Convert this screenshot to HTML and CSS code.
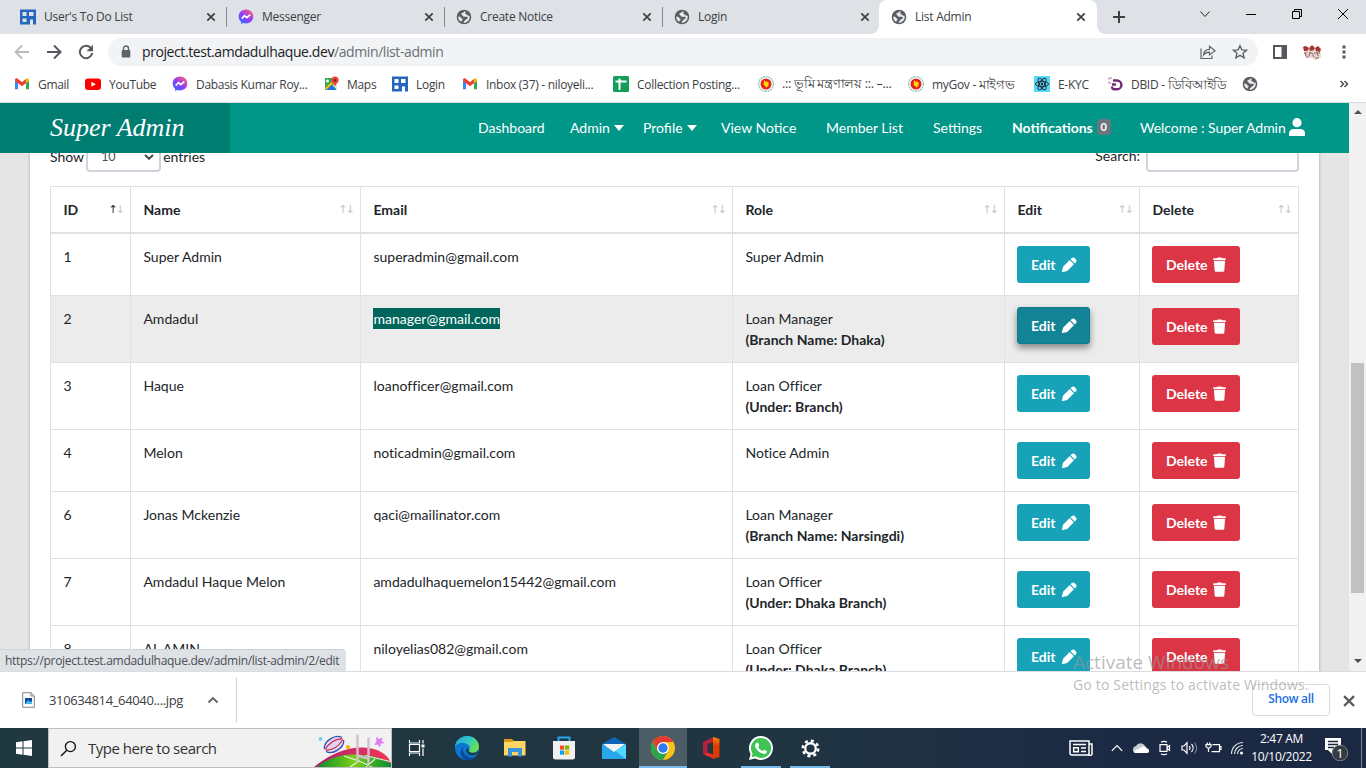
FILE: index.html
```html
<!DOCTYPE html>
<html lang="en">
<head>
<meta charset="utf-8">
<title>List Admin</title>
<link rel="stylesheet" href="styles.css">
</head>
<body>
<svg class="defs" width="0" height="0" aria-hidden="true">
  <defs>
    <linearGradient id="gm" x1="0" y1="1" x2=".8" y2="0"><stop offset="0" stop-color="#1a7cff"/><stop offset=".5" stop-color="#8a3cff"/><stop offset="1" stop-color="#ff5a80"/></linearGradient>
    <linearGradient id="ge" x1="0" y1="0" x2="1" y2=".5"><stop offset="0" stop-color="#1fa5e0"/><stop offset=".6" stop-color="#36c9c0"/><stop offset="1" stop-color="#6be04e"/></linearGradient>
    <linearGradient id="gf" x1="0" y1="0" x2="1" y2="0"><stop offset="0" stop-color="#0b8a28"/><stop offset=".5" stop-color="#7ad017"/><stop offset="1" stop-color="#0c8b34"/></linearGradient>
    <linearGradient id="gp" x1="0" y1="0" x2="1" y2="0"><stop offset="0" stop-color="#b02070"/><stop offset="1" stop-color="#f23658"/></linearGradient>
    <linearGradient id="go" x1="0" y1="0" x2="0" y2="1"><stop offset="0" stop-color="#ff8a00"/><stop offset=".4" stop-color="#e03c00"/><stop offset="1" stop-color="#d83b01"/></linearGradient>
  </defs>
  <symbol id="grid" viewBox="0 0 16 16"><path fill="#2467bd" fill-rule="evenodd" d="M0 .5h16v15h-3v-5h-3v5H0zM2.500 3v4h4V3zM9 3v4h4.500V3zM2.500 9.500v3.500h4V9.500z"/></symbol>
  <symbol id="globe" viewBox="0 0 16 16"><circle cx="8" cy="8" r="7.300" fill="#5a5e63"/><path fill="#e8eaec" d="M9.500 2.300c-1.800.3-2 1.500-3.300 1.700C5.200 4.200 5 5.500 6 6c1.200.5.500 1.500 2 1.700 1.300.2 3-.3 3.700.7.500.9-.4 1.500-1.400 1.700-.9.300-.7 1.600-1.900 1.800-.5.100-.8 1-.7 1.900 3.300.1 6-2.500 6-5.800 0-.6-.1-1.100-.2-1.600-1 .5-1.900.2-2.200-.5-.4-.8-1.300-.4-1.800-1-.5-.8.300-1.500 0-2.600zM2.300 7.500c-.2 2 .7 4.200 2.700 5.300.9-.3.600-1.400 1.300-1.700.8-.4.200-1.600-.6-1.700-1.200-.2-.7-1.400-1.800-1.600z"/></symbol>
  <symbol id="msg" viewBox="0 0 16 16"><path fill="url(#gm)" d="M8 .6C3.700.6.700 3.600.700 7.500c0 2.200.9 4 2.400 5.200l.1 2.300 2-.9c.9.300 1.800.4 2.800.4 4.300 0 7.300-3 7.300-6.900S12.300.6 8 .6z"/><path d="m3.700 9.700 2.800-3 2.300 1.900 3.500-2.900" fill="none" stroke="#fff" stroke-width="1.700"/></symbol>
  <symbol id="gmail" viewBox="0 0 16 16"><path fill="#4285f4" d="M1 4v9.200h3V7z"/><path fill="#34a853" d="M15 4v9.200h-3V7z"/><path fill="#ea4335" d="M1 3.800c0-1.500 1.600-2 2.700-1.100L8 6l4.300-3.300V7L8 10.200 1 5z"/><path fill="#fbbc04" d="M12 7V2.900c1.200-1.200 3-.6 3 .9V5z"/></symbol>
  <symbol id="x" viewBox="0 0 12 12"><path d="M2.300 2.300 9.700 9.700M9.700 2.300 2.300 9.700" stroke="currentColor" stroke-width="1.700"/></symbol>
  <symbol id="bd" viewBox="0 0 16 16"><circle cx="8" cy="8" r="7.300" fill="#fff" stroke="#8ec9ac" stroke-width="1.300" stroke-dasharray="2 .6"/><circle cx="8" cy="8" r="5.500" fill="#e32222"/><path fill="#ffd900" d="m6 4 1.500 2 1-.7 2.300 1.500-.4 3-1.900 1.900-1.600-1.900L5.700 9z"/></symbol>
  <symbol id="pencil" viewBox="0 0 16 16"><path fill="#fff" d="m.8 15.200 1.200-5.400L8.700 3.100 12.900 7.300 6.200 14zM9.500 2.300l1.300-1.300c.8-.8 2-.8 2.800 0l1.400 1.400c.8.8.8 2 0 2.800l-1.300 1.300z"/></symbol>
  <symbol id="trash" viewBox="0 0 14 16"><path fill="#fff" d="M.3 1.300h3.900L5 .4h4l.8.900h3.900v1.800H.3zM1 4h12l-.8 10.500c0 .7-.5 1.200-1.200 1.200H3c-.7 0-1.200-.5-1.200-1.200z"/></symbol>
</svg>

<header class="tabs">
  <div class="tab"><svg class="i16"><use href="#grid"/></svg><span>User's To Do List</span><svg class="close"><use href="#x"/></svg></div>
  <div class="tab"><svg class="i16"><use href="#msg"/></svg><span>Messenger</span><svg class="close"><use href="#x"/></svg></div>
  <div class="tab"><svg class="i16"><use href="#globe"/></svg><span>Create Notice</span><svg class="close"><use href="#x"/></svg></div>
  <div class="tab last"><svg class="i16"><use href="#globe"/></svg><span>Login</span><svg class="close"><use href="#x"/></svg></div>
  <div class="tab active"><svg class="i16"><use href="#globe"/></svg><span>List Admin</span><svg class="close"><use href="#x"/></svg></div>
  <svg class="plus" viewBox="0 0 14 14"><path d="M7 1v12M1 7h12" stroke="#3c4043" stroke-width="2"/></svg>
  <div class="winctl">
    <svg viewBox="0 0 12 12"><path d="m1.500 3.500 4.500 5 4.500-5" fill="none" stroke="#222"/></svg>
    <svg viewBox="0 0 12 12"><path d="M1 6.500h10" stroke="#000"/></svg>
    <svg viewBox="0 0 12 12"><path d="M1.500 3.500h7v7h-7zM3.500 3.500v-2h7v7h-2" fill="none" stroke="#000"/></svg>
    <svg viewBox="0 0 12 12"><path d="m1 1 10 10M11 1 1 11" stroke="#000"/></svg>
  </div>
</header>

<div class="toolbar">
  <div class="navbtns">
    <svg viewBox="0 0 16 16"><path d="M15 8H2M8 1.500 1.500 8 8 14.500" fill="none" stroke="#b9bbbe" stroke-width="1.800"/></svg>
    <svg viewBox="0 0 16 16"><path d="M1 8h13M8 1.500 14.500 8 8 14.500" fill="none" stroke="#55585c" stroke-width="2"/></svg>
    <svg viewBox="0 0 16 16"><path d="M13.200 4.500A6.200 6.200 0 1 0 14.200 9" fill="none" stroke="#55585c" stroke-width="2"/><path fill="#55585c" d="M15 .8v6.400H8.600z"/></svg>
  </div>
  <div class="address">
    <svg class="lock" viewBox="0 0 10 13"><path d="M2.500 6V3.500a2.500 2.500 0 0 1 5 0V6" fill="none" stroke="#5f6368" stroke-width="1.400"/><rect x=".7" y="5" width="8.600" height="7.500" rx="1" fill="#5f6368"/></svg>
    <span class="url">project.test.amdadulhaque.dev<i>/admin/list-admin</i></span>
    <svg class="i16 share" viewBox="0 0 16 16"><path d="M1 4.500v10h11v-3M3.500 11c.5-4 2.700-5.700 6-5.700V2.200L15 6.700l-5.500 4.200V8.200C7 8.200 5 9 3.500 11z" fill="none" stroke="#5f6368" stroke-width="1.200"/></svg>
    <svg class="i16" viewBox="0 0 16 16"><path d="m8 1.700 1.900 4.200 4.600.4-3.500 3 1.100 4.500L8 11.400l-4.100 2.400L5 9.300l-3.500-3 4.600-.4z" fill="none" stroke="#5f6368" stroke-width="1.400"/></svg>
  </div>
  <svg class="panel" viewBox="0 0 14 14"><path fill="#55585c" fill-rule="evenodd" d="M0 0h14v14H0zM2 2v10h6.500V2z"/></svg>
  <svg class="avatar" viewBox="0 0 20 16"><path fill="#c9a79f" d="M2 6h16l1 7-5 3-4-2-7-1z" opacity=".5"/><path fill="#a4342e" d="M1 3l2-1 3 1 1 2-2 2H2zM7 4l3-3 3 3-1 2-4 1zM13 4l3-2 3 3-1 3-4-1z"/><path d="M2 9h3m2 0h3m2 0h6M3 9l1 3m4-4-1 4m3-3 2 4m3-5 1 4M4 13h3m6 1h4" stroke="#8b4a44" stroke-width="1" opacity=".8"/></svg>
  <svg class="menu" viewBox="0 0 4 14"><path fill="#55585c" d="M.5.500h3v3h-3zM.5 5.500h3v3h-3zM.5 10.500h3v3h-3z"/></svg>
</div>

<div class="bookmarks">
  <a><svg class="i16"><use href="#gmail"/></svg>Gmail</a>
  <a><svg class="i16" viewBox="0 0 16 16"><rect y="2.500" width="16" height="11.500" rx="3" fill="#f00"/><path fill="#fff" d="m6.300 5.700 4.500 2.500-4.500 2.500z"/></svg>YouTube</a>
  <a><svg class="i16"><use href="#msg"/></svg>Dabasis Kumar Roy...</a>
  <a><svg class="i16" viewBox="0 0 16 16"><path fill="#34a853" d="M2 2h11v12H2z"/><path fill="#1a73e8" d="M13.500 14H3l5.500-5z"/><path fill="#fbbc04" d="m2 12 8-7.500 1.500 1.500L3 14z"/><path fill="#e0e3e7" d="m9.500 9 2-1.500L14 9v5z"/><path fill="#ea4335" d="M12 .5a3.600 3.600 0 0 0-3.600 3.700c0 2.400 2.700 3.300 3.600 6.300.9-3 3.600-3.900 3.600-6.300A3.600 3.600 0 0 0 12 .5z"/><circle cx="12" cy="4.200" r="1.300" fill="#891d18"/><circle cx="4.500" cy="5" r="1.500" fill="#fff"/></svg>Maps</a>
  <a><svg class="i16"><use href="#grid"/></svg>Login</a>
  <a><svg class="i16"><use href="#gmail"/></svg>Inbox (37) - niloyeli...</a>
  <a><svg class="i16" viewBox="0 0 16 16"><rect width="16" height="16" rx="1.500" fill="#129d58"/><path stroke="#fff" stroke-width="2" d="M2.500 5.500h11M6.500 2.500v11.500"/></svg>Collection Posting...</a>
  <a class="bn bn1"><svg class="i16"><use href="#bd"/></svg><span>.:: ভূমি মন্ত্রণালয় ::. –...</span></a>
  <a class="bn bn2"><svg class="i16"><use href="#bd"/></svg><span>myGov - <em>মাইগভ</em></span></a>
  <a><svg class="i16" viewBox="0 0 16 16"><rect width="16" height="16" rx="1" fill="#55d7fa"/><g fill="none" stroke="#20232a" stroke-width=".9"><ellipse cx="8" cy="8" rx="6.500" ry="2.600"/><ellipse cx="8" cy="8" rx="6.500" ry="2.600" transform="rotate(60 8 8)"/><ellipse cx="8" cy="8" rx="6.500" ry="2.600" transform="rotate(120 8 8)"/></g><circle cx="8" cy="8" r="1.200" fill="#20232a"/></svg>E-KYC</a>
  <a class="bn bn3"><svg class="i16" viewBox="0 0 16 16"><path d="M6 4.500h4a4.300 4.300 0 0 1 0 8.800H7.500C6 13.300 5 12 5 10.500M5 8.500h4" fill="none" stroke="#772879" stroke-width="2.400"/><path d="m5 2-3 .2.500 1.600M1 6l3 1.500" fill="none" stroke="#d7a3b4" stroke-width="1.500"/></svg><span>DBID - <em>ডিবিআইডি</em></span></a>
  <a><svg class="i16"><use href="#globe"/></svg></a>
  <svg class="more" viewBox="0 0 10 8"><path d="m1.500 1 3 3-3 3M5.500 1l3 3-3 3" fill="none" stroke="#4b4f53" stroke-width="1.500"/></svg>
</div>

<div class="viewport">
  <main class="page">
    <nav class="nav">
      <div class="brand"><span>Super Admin</span></div>
      <div class="links">
        <a>Dashboard</a>
        <a>Admin<b class="caret"></b></a>
        <a>Profile<b class="caret"></b></a>
        <a>View Notice</a>
        <a>Member List</a>
        <a>Settings</a>
        <a class="strong">Notifications<span class="count">0</span></a>
        <a class="welcome">Welcome : Super Admin<svg class="user" viewBox="0 0 16 18"><circle cx="8" cy="4.700" r="4.600" fill="#fff"/><path fill="#fff" d="M0 18v-2.500C0 12.500 2 11 4.500 11h7c2.500 0 4.500 1.500 4.500 4.500V18z"/></svg></a>
      </div>
    </nav>
    <div class="content">
      <section class="card">
        <div class="controls">
          <div class="length">Show <div class="select">10<svg viewBox="0 0 10 6"><path d="m1 1 4 3.700L9 1" fill="none" stroke="#3f464c" stroke-width="2"/></svg></div> entries</div>
          <div class="search">Search: <div class="input"></div></div>
        </div>
        <table class="list">
          <colgroup><col class="c1"><col class="c2"><col class="c3"><col class="c4"><col class="c5"><col class="c6"></colgroup>
          <thead><tr>
            <th><div>ID<span class="sort"><b>↑</b>↓</span></div></th>
            <th><div>Name<span class="sort">↑↓</span></div></th>
            <th><div>Email<span class="sort">↑↓</span></div></th>
            <th><div>Role<span class="sort">↑↓</span></div></th>
            <th><div>Edit<span class="sort">↑↓</span></div></th>
            <th><div>Delete<span class="sort">↑↓</span></div></th>
          </tr></thead>
          <tbody>
            <tr><td>1</td><td>Super Admin</td><td>superadmin@gmail.com</td><td>Super Admin</td><td><a class="btn edit">Edit<svg><use href="#pencil"/></svg></a></td><td><a class="btn del">Delete<svg><use href="#trash"/></svg></a></td></tr>
            <tr class="hover"><td>2</td><td>Amdadul</td><td><mark>manager@gmail.com</mark></td><td>Loan Manager<br><b>(Branch Name: Dhaka)</b></td><td><a class="btn edit pressed">Edit<svg><use href="#pencil"/></svg></a></td><td><a class="btn del">Delete<svg><use href="#trash"/></svg></a></td></tr>
            <tr><td>3</td><td>Haque</td><td>loanofficer@gmail.com</td><td>Loan Officer<br><b>(Under: Branch)</b></td><td><a class="btn edit">Edit<svg><use href="#pencil"/></svg></a></td><td><a class="btn del">Delete<svg><use href="#trash"/></svg></a></td></tr>
            <tr><td>4</td><td>Melon</td><td>noticadmin@gmail.com</td><td>Notice Admin</td><td><a class="btn edit">Edit<svg><use href="#pencil"/></svg></a></td><td><a class="btn del">Delete<svg><use href="#trash"/></svg></a></td></tr>
            <tr><td>6</td><td>Jonas Mckenzie</td><td>qaci@mailinator.com</td><td>Loan Manager<br><b>(Branch Name: Narsingdi)</b></td><td><a class="btn edit">Edit<svg><use href="#pencil"/></svg></a></td><td><a class="btn del">Delete<svg><use href="#trash"/></svg></a></td></tr>
            <tr><td>7</td><td>Amdadul Haque Melon</td><td>amdadulhaquemelon15442@gmail.com</td><td>Loan Officer<br><b>(Under: Dhaka Branch)</b></td><td><a class="btn edit">Edit<svg><use href="#pencil"/></svg></a></td><td><a class="btn del">Delete<svg><use href="#trash"/></svg></a></td></tr>
            <tr><td>8</td><td>AL AMIN</td><td>niloyelias082@gmail.com</td><td>Loan Officer<br><b>(Under: Dhaka Branch)</b></td><td><a class="btn edit">Edit<svg><use href="#pencil"/></svg></a></td><td><a class="btn del">Delete<svg><use href="#trash"/></svg></a></td></tr>
          </tbody>
        </table>
      </section>
    </div>
  </main>
  <div class="scrollbar"><i class="up"></i><div class="thumb"></div><i class="down"></i></div>
  <div class="status">https://project.test.amdadulhaque.dev/admin/list-admin/2/edit</div>
</div>

<div class="downloads">
  <div class="file">
    <svg class="doc" viewBox="0 0 13 16"><path d="M.7.700h8.300l3.300 3.300v11.300H.7z" fill="#fafafa" stroke="#888"/><path d="M9 .7V4h3.300" fill="none" stroke="#888"/><path fill="#134a9a" d="M3 6h7v6H3z"/><path fill="#43b9ee" d="m3 12 3-4 2 2 2-1v3z"/></svg>
    <span>310634814_64040....jpg</span>
    <svg class="chev" viewBox="0 0 12 8"><path d="m1.500 6.500 4.500-4.500 4.500 4.500" fill="none" stroke="#5f6368" stroke-width="1.800"/></svg>
  </div>
  <a class="showall">Show all</a>
  <svg class="dclose"><use href="#x"/></svg>
</div>
<div class="watermark"><p class="wm1">Activate Windows</p><p class="wm2">Go to Settings to activate Windows.</p></div>

<footer class="taskbar">
  <div class="cell start"><svg viewBox="0 0 16 16" width="16" height="16"><path fill="#fff" d="M0 2.300 6.500 1.300v6.200H0zM7.500 1.200 16 0v7.500H7.500zM0 8.500h6.500v6.200L0 13.700zM7.500 8.500H16V16l-8.500-1.200z"/></svg></div>
  <div class="find">
    <svg class="glass" viewBox="0 0 18 18"><circle cx="11" cy="7" r="5.300" fill="none" stroke="#111" stroke-width="1.400"/><path d="M7.200 10.800 1 17" stroke="#111" stroke-width="1.500"/></svg>
    <span>Type here to search</span>
    <svg class="rugby" viewBox="0 0 78 38"><path fill="url(#gp)" d="M1 38C14 27 32 18 50 18.500 66 19 75 26 78 34v4z"/><path fill="url(#gf)" d="M4 38c10-8 22-12.500 36-12.500 18 0 33 5 38 9.500v3z"/><path d="M31 27l15 5-9 6M46 32l13 6M62 30l-9 8M52 26.500l25 6" fill="none" stroke="#e6f5d9" stroke-width="1.100"/><path d="M44.500 5.500v27M55.500 8.500v27M44 26.500l11 3" stroke="#d2bfd0" stroke-width="2.400"/><circle cx="7.500" cy="10" r="1.900" fill="#6dd2e8"/><circle cx="35" cy="18" r="2" fill="#ffae00"/><path fill="#e07cf5" d="m63 8 3 2 3.500-1.500-1 3.500 3.500 2-4 .5-1 4-2-3-4 .5 2.500-3.500z"/><g transform="rotate(-33 21 15.500)"><ellipse cx="21" cy="15.500" rx="11" ry="6.500" fill="#ddd5f2"/><path d="M10.500 14C14 7 28 7 31.500 14M10.500 17c3.500 7 17.500 7 21 0" fill="none" stroke="#3550b0" stroke-width="1.300"/><path d="M11 15q10-5.500 20 0M11 16q10 5.500 20 0" fill="none" stroke="#d52645" stroke-width="1.100"/></g></svg>
  </div>
  <div class="cell w48"><svg viewBox="0 0 17 16" width="17" height="16"><path d="M1.500 0v3h10V0M1.500 16v-3h10v3M1.500 4.500h10v7h-10zM15 0v3.500M15 8.500V16" fill="none" stroke="#fff" stroke-width="1.200"/><path fill="#fff" d="M13.500 4.500h3v3h-3z"/></svg></div>
  <div class="cell w54"><svg viewBox="0 0 24 24" width="24" height="24"><circle cx="12" cy="12" r="12" fill="#0a78d0"/><path fill="url(#ge)" d="M0 11C.5 4 6 0 12 0c7 0 12 5 12 10.500 0 4-3 6-6.500 6-2.500 0-4-1-3.500-2 1-1.500 1.500-3 0-5C10 5.500 3 6 0 11z"/><path fill="#0c4a9a" d="M9 10c-3 5 1 11 7.500 11.500 2.500 0 4-.6 5.500-1.500C19 24 13 25 9.500 23.500 5 21 4 14 9 10z"/><path fill="#213640" d="M14 14.500c-1 1.500 1 2.500 3.500 2.500 2 0 4-.5 5.500-2-.2 3-3 4.500-6 4.500-4 0-7-4-5-7.500z"/></svg></div>
  <div class="cell w42"><svg viewBox="0 0 22 20" width="22" height="20"><path fill="#d99a17" d="M0 1h8l2 2v5H0z"/><path fill="#ffd566" d="M0 4h8l2-1h11.500v14.500H0z"/><path fill="#3b94d9" d="M4 10h14v8.500h-4V14H8v4.500H4z"/></svg></div>
  <div class="cell w56"><svg viewBox="0 0 24 24" width="24" height="24"><path d="M6.500 5V1.500h11V5" fill="none" stroke="#27a7e8" stroke-width="2"/><path fill="#f0f0f0" d="M1 5h22v16a2.500 2.500 0 0 1-2.500 2.500h-17A2.500 2.500 0 0 1 1 21z"/><path fill="#f25022" d="M8 9.500h4.200v4.200H8z"/><path fill="#7fba00" d="M13 9.500h4.200v4.200H13z"/><path fill="#00a4ef" d="M8 14.500h4.200v4.200H8z"/><path fill="#ffb900" d="M13 14.500h4.200v4.200H13z"/></svg></div>
  <div class="cell w44"><svg viewBox="0 0 24 24" width="24" height="24"><path fill="#0f65b8" d="M0 8 12 1l12 7v7H0z"/><path fill="#f3f4f5" d="M1 8h22l-11 9z"/><path fill="#28a8ea" d="m0 8 12 8 12-8v15H0z"/><path fill="#50d9ff" d="m13.500 15 10.500 8V8z"/></svg></div>
  <div class="cell chrome"><svg viewBox="0 0 24 24" width="24" height="24"><circle cx="12" cy="12" r="12" fill="#fbc116"/><path fill="#e33b2e" d="M1.600 6A12 12 0 0 1 22.400 6H12l-5 9z"/><path fill="#2da44e" d="M1.600 6A12 12 0 0 0 12 24l5.200-9L12 17l-5.200-2z"/><circle cx="12" cy="12" r="6" fill="#fff"/><circle cx="12" cy="12" r="4.700" fill="#3078ee"/></svg></div>
  <div class="cell w42"><svg viewBox="0 0 18 22" width="18" height="22"><path fill="#b5203c" d="M1 5 12 0v5L5.500 7v8.500L1 17z"/><path fill="url(#go)" d="m11 0 6.500 2v18L11 22z"/><path fill="#e9302d" d="m1 17 4.500-1.500L12 18v4z"/></svg></div>
  <div class="cell run w58"><svg viewBox="0 0 24 24" width="24" height="24"><path fill="#fff" d="M12 0a12 12 0 0 0-10.400 18L0 24l6-1.600A12 12 0 1 0 12 0z"/><path fill="#3dc453" d="M12 2a10 10 0 0 0-8.400 15.400l-1 3.900 4-1A10 10 0 1 0 12 2z"/><path fill="#fff" d="M8 6.500c.8 0 1.100 0 1.400.8l.8 2c0 .5-.5 1.200-1.100 1.800 1.100 2 2.600 3.200 4.600 4 .7-.8 1.200-1.500 1.600-1.400l2.400 1.200c.5.400 0 1.700-.6 2.300-1 .8-2.400 1.100-4.900-.1-2.800-1.200-5-3.700-5.900-6-.7-2 .4-4 1.700-4.600z"/></svg></div>
  <div class="cell run w40"><svg viewBox="0 0 18 18" width="19" height="19"><circle cx="9" cy="9" r="5" fill="none" stroke="#fff" stroke-width="2.200"/><circle cx="9" cy="9" r="7.300" fill="none" stroke="#fff" stroke-width="2.500" stroke-dasharray="2.870 2.870"/></svg></div>
  <div class="tray">
    <div class="cell w36"><svg viewBox="0 0 24 16" width="24" height="16"><path d="M1 1h19v14H3a2 2 0 0 1-2-2zM20 4h3v9a2 2 0 0 1-4 1M4 4.500h13M12 8h5M12 11.500h5M4.700 7.700h4.600v4.100H4.700z" fill="none" stroke="#fff" stroke-width="1.500"/></svg></div>
    <div class="cell w24 first"><svg viewBox="0 0 12 8" width="12" height="8"><path d="m.8 6.800 5.200-5.200 5.200 5.200" fill="none" stroke="#fff" stroke-width="1.200"/></svg></div>
    <div class="cell w24"><svg viewBox="0 0 16 12" width="16" height="12"><path fill="#c8ccd0" d="M0 8a4 4 0 0 1 3-4 5 5 0 0 1 9 0l4 4-4 3H3a3 3 0 0 1-3-3z"/><path fill="#fff" d="M1 9.500C3 7 6 7 8 5.500c3-2 5-.5 5 1 2 0 3 1 3 2.500S15 11 14 11H3c-1 0-1.600-.5-2-1.500z"/></svg></div>
    <div class="cell w24"><svg viewBox="0 0 14 16" width="14" height="16"><path d="M3 2.300Q6 .3 9 2.300M3 13.700q3 2 6 0M2 4.700h7v6.600H2zM9 7.500l2.500-1.800v4.600L9 8.500" fill="none" stroke="#fff" stroke-width="1.200"/></svg></div>
    <div class="cell w24"><svg viewBox="0 0 17 14" width="17" height="14"><path d="M1 5h2L6 1.700v10.600L3 9H1zM8.500 5a4 4 0 0 1 0 4M10.500 3a6 6 0 0 1 0 8" fill="none" stroke="#fff" stroke-width="1.200"/><path d="M13.500 1.500a9 9 0 0 1 0 11" fill="none" stroke="#8b95a5"/></svg></div>
    <div class="cell w24"><svg viewBox="0 0 17 14" width="17" height="14"><path d="M7.500 3.600h7v7h-8M14.500 5.500H16v3h-1.500M1 3.600h5v2L4.500 7h-2L1 5.600zM2.300 1.500v2M4.700 1.500v2M3.500 7v4" fill="none" stroke="#fff" stroke-width="1.200"/></svg></div>
    <div class="cell w24"><svg viewBox="0 0 14 14" width="14" height="14"><path d="M1.500 13A11.500 11.500 0 0 1 13 1.500M4.500 13A8.500 8.500 0 0 1 13 4.500M7.500 13A5.500 5.500 0 0 1 13 7.500" fill="none" stroke="#dfe3e9" stroke-width="1.200"/><circle cx="11.500" cy="12" r="1.500" fill="#fff"/></svg></div>
    <div class="clock"><span>2:47 AM</span><span class="date">10/10/2022</span></div>
    <div class="cell note"><svg viewBox="0 0 26 26" width="26" height="26"><path fill="#fff" d="M2 3h16v12H9v4l-4-4H2z"/><path d="M5 6.500h10M5 9.500h10M5 12.500h6" stroke="#1e2b3c" stroke-width="1.300"/><circle cx="17" cy="18" r="7.800" fill="#343a40" stroke="#777d84"/><text x="17" y="22.500" text-anchor="middle" class="badge">1</text></svg></div>
  </div>
</footer>
</body>
</html>
```
FILE: styles.css
```css
* { box-sizing: border-box; }
body {
  margin: 0; width: 1366px; height: 768px; overflow: hidden; position: relative;
  display: flex; flex-direction: column; background: #fff; color: #3c4043;
  font-family: "Open Sans", "Noto Sans", sans-serif; font-size: 12px; white-space: nowrap;
}
.defs { position: absolute; }
svg { display: block; flex: none; }
.i16 { width: 16px; height: 16px; }

/* Tab strip */
.tabs { height: 34px; background: #dee1e6; display: flex; align-items: center; padding-left: 8px; }
.tab { width: 218px; height: 34px; padding: 0 9px 0 12px; display: flex; align-items: center; gap: 8px; position: relative; letter-spacing: -.25px; }
.tab.last { width: 217px; padding-right: 8px; }
.tab span { flex: 1; margin-top: -1px; }
.close { width: 12px; height: 12px; color: #3c4043; }
.tab:not(.active):not(.last)::after { content: ""; position: absolute; right: -1px; top: 7px; width: 1px; height: 20px; background: #85888d; }
.active { background: #fff; border-radius: 8px 8px 0 0; padding-right: 10px; }
.active::before, .active::after { content: ""; position: absolute; bottom: 0; width: 8px; height: 8px; }
.active::before { left: -8px; background: radial-gradient(circle at 0 0, #dee1e6 7.500px, #fff 8px); }
.active::after { right: -8px; background: radial-gradient(circle at 100% 0, #dee1e6 7.500px, #fff 8px); }
.plus { width: 14px; height: 14px; margin-left: 15px; }
.winctl { margin: -6px 0 0 auto; padding-right: 17px; display: flex; gap: 34px; }
.winctl svg { width: 12px; height: 12px; }

/* Toolbar */
.toolbar { height: 36px; display: flex; align-items: center; padding-left: 14px; }
.navbtns { display: flex; gap: 16px; width: 94px; }
.navbtns svg { width: 16px; height: 16px; }
.address { width: 1150px; height: 28px; border-radius: 14px; background: #f1f3f4; display: flex; align-items: center; padding: 0 10px 0 13px; }
.lock { width: 10px; height: 13px; margin-bottom: 1px; }
.url { margin: -1px 0 0 11px; flex: 1; font-size: 14px; letter-spacing: -.41px; color: #202124; }
.url i { font-style: normal; color: #6b6f74; }
.share { margin-right: 16px; }
.panel { width: 14px; height: 14px; margin-left: 15px; }
.avatar { width: 20px; height: 16px; margin-left: 15px; }
.menu { width: 4px; height: 14px; margin-left: 20px; }

/* Bookmarks */
.bookmarks { height: 33px; border-bottom: 1px solid #dadce0; padding: 0 0 4px 14px; display: grid; align-items: center; grid-template-columns: 71px 87px 151px 69px 70px 151px 145px 150px 126px 73px 135px 101px 10px; }
.bookmarks a { display: flex; align-items: center; gap: 8px; height: 18px; letter-spacing: -.3px; }
.bn { font-size: 12px; line-height: 18px; }
.bn em { font-style: normal; font-size: 13px; }
.bn1 span { font-size: 12.500px; }
.more { width: 10px; height: 8px; margin-left: -4px; }

/* Web page */
.viewport { height: 568px; display: flex; position: relative; font-family: Lato, sans-serif; font-size: 14px; color: #212529; }
.page { width: 1349px; overflow: hidden; background: #e5e5e5; }
.nav { height: 50px; background: #009688; display: flex; color: #fff; position: relative; z-index: 2; }
.brand { width: 230px; background: #007d71; padding: 9px 0 0 50px; font-family: "Z003", "URW Chancery L", "Liberation Serif", serif; font-style: italic; font-size: 26px; line-height: 32px; }
.links { flex: 1; padding: 0 0 2px 248px; display: grid; align-items: center; grid-template-columns: 92px 73px 78px 105px 107px 79px 128px 180px; }
.links a { display: flex; align-items: center; }
.caret { border: 5px solid transparent; border-top: 6px solid #fff; border-bottom: 0; margin: 1px 0 0 4px; }
.strong { font-weight: 700; }
.count { margin-left: 4px; background: #6c757d; border-radius: 4px; width: 14px; height: 16px; line-height: 15px; text-align: center; font-size: 11px; }
.welcome { letter-spacing: -.05px; }
.user { width: 16px; height: 18px; margin: -1px 0 0 3px; }
.content { height: 518px; overflow: hidden; padding: 0 30px; }
.card { width: 1289px; background: #fff; padding: 0 20px; box-shadow: 0 0 3px rgba(0,0,0,.3); }
.controls { display: flex; justify-content: space-between; height: 33px; }
.length, .search { display: flex; align-items: center; height: 31px; margin-top: -12px; line-height: 20px; }
.length { gap: 2px; padding-top: 1px; }
.select { width: 75px; height: 31px; border: 2px solid #ced4da; border-radius: 4px; padding: 0 5px 0 13px; font-size: 12.500px; color: #495057; display: flex; align-items: center; justify-content: space-between; }
.select svg { width: 10px; height: 6px; }
.search { gap: 6px; padding-bottom: 1px; }
.input { width: 153px; height: 31px; border: 2px solid #ced4da; border-radius: 4px; }
.length .select { margin-top: -1px; }
.search .input { margin-bottom: -1px; }

.list { table-layout: fixed; width: 1249px; border-collapse: separate; border-spacing: 0; border-right: 1px solid #dee2e6; line-height: 21px; }
.c1 { width: 80px; } .c2 { width: 230px; } .c3 { width: 372px; } .c4 { width: 272px; } .c5 { width: 135px; } .c6 { width: 159px; }
.list th, .list td { border-left: 1px solid #dee2e6; border-top: 1px solid #dee2e6; padding: 12px 12px 12px 12.400px; text-align: left; vertical-align: top; letter-spacing: .02px; }
.list td:nth-child(n+5) { padding-left: 12px; letter-spacing: 0; }
.list th { height: 48px; border-bottom: 2px solid #dee2e6; padding-right: 5px; }
.list tbody tr:first-child td { border-top: 0; }
.list th div { display: flex; justify-content: space-between; }
.sort { font: 11px/21px "DejaVu Sans", sans-serif; color: #c3c6c8; letter-spacing: -2px; padding-right: 2px; }
.sort b { font-weight: 400; color: #212529; }
.hover td { background: #ececec; }
mark { background: #00665b; color: #fff; display: inline-block; }
.btn { display: flex; align-items: center; width: 88px; height: 37px; padding-left: 14px; border-radius: 3px; color: #fff; font-weight: 700; }
.btn svg { width: 16px; height: 16px; margin-left: 5px; }
.del { background: #dc3545; }
.del svg { width: 13px; height: 15px; }
.edit { width: 73px; background: #17a2b8; }
.pressed { background: #138496; border: 1px solid #117a8b; padding-left: 13px; margin: -1px 0 1px; box-shadow: 0 4px 7px rgba(0,0,0,.42); }

.scrollbar { width: 17px; background: #f1f1f1; padding: 7px 0 8px 2px; display: flex; flex-direction: column; }
.scrollbar i { border: 4px solid transparent; width: 8px; margin-left: 3px; }
.scrollbar .up { border-bottom-color: #505050; border-top: 0; }
.scrollbar .down { border-top-color: #505050; border-bottom: 0; margin-top: auto; }
.thumb { width: 13px; height: 230px; margin-top: 249px; background: #c1c1c1; }
.status { position: absolute; left: 0; bottom: 0; width: 346px; height: 22px; background: #dee1e6; border-top: 1px solid #cfd2d6; border-top-right-radius: 4px; padding-left: 5px; color: #4b4f54; font: 12px/22px "Open Sans", sans-serif; letter-spacing: -.3px; z-index: 3; }

/* Downloads */
.downloads { height: 57px; border-top: 1px solid #dadce0; background: #fff; display: flex; align-items: center; }
.file { width: 237px; height: 44px; border-right: 1px solid #cfd0d2; display: flex; align-items: center; padding-left: 22px; }
.doc { width: 13px; height: 16px; margin-right: 14px; }
.file span { flex: 1; font-size: 13px; letter-spacing: -.35px; }
.chev { width: 12px; height: 8px; margin-right: 17px; }
.showall { margin-left: auto; width: 78px; height: 32px; border: 1px solid #dadce0; border-radius: 4px; color: #1a6fe8; font-weight: 600; line-height: 28px; text-align: center; letter-spacing: -.3px; }
.dclose { width: 14px; height: 14px; margin: 0 11px 0 11px; color: #55585c; }
.dclose use { transform: scale(1.150); }
.watermark { position: absolute; left: 1073px; top: 651px; color: rgba(150,150,150,.65); z-index: 5; }
.watermark p { margin: 0; }
.wm1 { font-size: 19px; line-height: 23px; }
.wm2 { font-size: 14px; line-height: 22px; letter-spacing: .18px; }

/* Taskbar */
.taskbar { height: 40px; display: flex; background: linear-gradient(90deg, #20383f, #203541 55%, #1b2944 85%, #1b2842); color: #fff; }
.cell { display: flex; align-items: center; justify-content: center; flex: none; position: relative; }
.start, .w48 { width: 48px; }
.find { width: 344px; background: #f1f1f1; border: 1px solid #bdbfc0; color: #333; display: flex; align-items: center; font-size: 15px; }
.glass { width: 17px; height: 17px; margin: 0 11px; }
.find span { flex: 1; letter-spacing: -.5px; }
.rugby { width: 78px; height: 38px; }
.w54 { width: 54px; } .w42 { width: 42px; } .w56 { width: 56px; } .w44 { width: 44px; } .w58 { width: 58px; } .w40 { width: 40px; } .w36 { width: 36px; } .w24 { width: 24px; }
.chrome { width: 48px; margin: 0 3px; background: #4c5d66; border-bottom: 2px solid #76b9ed; padding-top: 2px; }
.run::after { content: ""; position: absolute; bottom: 0; width: 40px; height: 2px; background: #76b9ed; }
.tray { margin-left: auto; width: 303px; display: flex; }
.first { margin-left: 6px; }
.clock { width: 64px; display: flex; flex-direction: column; align-items: center; line-height: 18px; padding: 2px 0 0 1px; letter-spacing: -.3px; }
.note { width: 40px; padding-left: 6px; }
.tray::after { content: ""; width: 1px; margin-left: 8px; background: #7a8494; }
.badge { font: 13px "Open Sans", sans-serif; fill: #fff; }
```
